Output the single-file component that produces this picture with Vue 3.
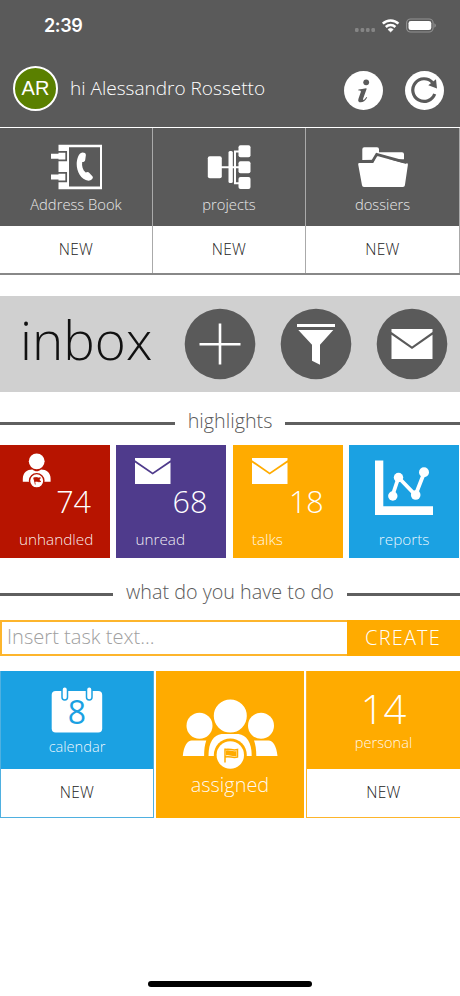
<script setup>
const shortcuts = [
  { id: 'book', label: 'Address Book' },
  { id: 'projects', label: 'projects' },
  { id: 'dossiers', label: 'dossiers' }
]
const highlights = [
  { id: 'unhandled', count: 74, icon: 'person' },
  { id: 'unread', count: 68, icon: 'mail' },
  { id: 'talks', count: 18, icon: 'mail' },
  { id: 'reports', icon: 'chart' }
]
</script>

<template>
  <div class="screen">
    <header class="header">
      <div class="status">
        <span class="time">2:39</span>
        <svg class="signals" width="84" height="18" viewBox="0 0 84 18">
          <g fill="#858585">
            <rect x="1" y="12" width="3.6" height="4" rx="1.3" /><rect x="6.6" y="12" width="3.6" height="4" rx="1.3" />
            <rect x="12" y="12" width="3.6" height="4" rx="1.3" /><rect x="17.4" y="12" width="3.6" height="4" rx="1.3" />
          </g>
          <g fill="none" stroke="#fff" stroke-width="2.5">
            <path d="M28.8 7.7a11 11 0 0 1 15.6 0" /><path d="M31.8 11a7 7 0 0 1 9.6 0" />
          </g>
          <path d="M36.6 16 33.9 13.4a4 4 0 0 1 5.4 0Z" fill="#fff" stroke="#fff" stroke-width=".5" />
          <rect x="52.6" y="3" width="26.5" height="13" rx="4" fill="none" stroke="#929292" stroke-width="1.1" />
          <rect x="54.5" y="4.9" width="22.8" height="9.2" rx="2.3" fill="#fff" />
          <path d="M80.4 7.3c2 .8 2 3.6 0 4.4Z" fill="#929292" />
        </svg>
      </div>
      <div class="user">
        <span class="avatar">AR</span>
        <span class="hello">hi Alessandro Rossetto</span>
        <svg class="info" width="39" height="39" viewBox="0 0 39 39">
          <circle cx="19.5" cy="19.5" r="19.5" fill="#fff" />
          <circle cx="22.2" cy="11.3" r="2.9" fill="#5a5a5a" />
          <path d="M14.4 18.5c2.4-.2 5-.8 7.7-1.2.5 0 .6.3.5.7l-3.5 9.8c-.4 1.3.4 1.4 1.3.7.7-.6 1.4-1.4 2-2.4l.8.4c-2 3.5-4.2 4.8-6.4 4.8-2.1 0-3.1-1.3-2.4-3.4l2.4-6.8c.4-1.3-.3-1.7-2.4-1.7Z" fill="#5a5a5a" />
        </svg>
        <svg class="refresh" width="39" height="39" viewBox="0 0 39 39">
          <circle cx="19.5" cy="19.5" r="19.5" fill="#fff" />
          <path d="M29.7 23A11.3 11.3 0 1 1 27.500 11.500" fill="none" stroke="#5a5a5a" stroke-width="3.200" />
          <path d="M31 8.300 32 17.400 23.300 14.200Z" fill="#5a5a5a" />
        </svg>
      </div>
    </header>

    <nav class="shortcuts">
      <div v-for="s in shortcuts" :key="s.id" class="shortcut">
        <div class="shortcut-top">
          <svg v-if="s.id === 'book'" width="52" height="46" viewBox="0 0 52 46">
            <path d="M8.500 .7h43.500v44.500h-43.500z" fill="#fff" />
            <path d="M19 3.200h31v39.300h-31z" fill="#5a5a5a" />
            <path d="M8 7.900h8.200v8.500H8M8 28.900h8.200v8.500H8" fill="none" stroke="#5a5a5a" stroke-width="1.700" />
            <path d="M1 9.700h13.500v5H1zM1 30.500h13.500v5H1z" fill="#fff" />
            <path d="M30.500 9.200c2-1.300 5.300-.5 5.400 1.700l-.7 5c-.2 1.700-1.700 2.100-3 2-.6 4.100.5 7.800 3.500 10.700 1.400-1 2.800-.8 3.700.3l3.200 3.600c1.200 1.700-1.400 4.100-4.100 4.200C30.800 36.200 26.600 27 26.700 20.300c0-4.600 1.500-9.500 3.800-11.100Z" fill="#fff" />
          </svg>
          <svg v-else-if="s.id === 'projects'" width="46" height="46" viewBox="0 0 46 46">
            <path d="M13 23.200h20M33 7.500H29V39.300H34" fill="none" stroke="#fff" stroke-width="2" />
            <g fill="#fff">
              <rect x="1.800" y="12.300" width="14" height="22" rx="2" /><rect x="22.500" y="7" width="7.500" height="32" rx="2" fill="none" />
              <rect x="22.500" y="7" width="4.300" height="32" rx="1.500" />
              <rect x="32.500" y="1.200" width="12" height="12" rx="2" /><rect x="32.500" y="17.200" width="12" height="12" rx="2" /><rect x="32.500" y="33" width="12" height="12" rx="2" />
            </g>
          </svg>
          <svg v-else width="52" height="46" viewBox="0 0 52 46">
            <path d="M5.300 16V5.200a2 2 0 0 1 2-2H20a2 2 0 0 1 2 2v3h23a2 2 0 0 1 2 2v5Z" fill="#fff" />
            <path d="M2 19h14l3.500-7.300 27 7.300h3a1.500 1.500 0 0 1 1.400 1.700l-3 20.500a2 2 0 0 1-2 1.800H7a2 2 0 0 1-2-1.800L1.200 20.600Q1 19 2 19Z" fill="#fff" />
            <path d="M3 17.400H15.500l4.200-7 30 8.300" fill="none" stroke="#5a5a5a" stroke-width="2.800" />
          </svg>
          <span class="caption">{{ s.label }}</span>
        </div>
        <div class="new">NEW</div>
      </div>
    </nav>

    <section class="inbox">
      <span class="inbox-title">inbox</span>
      <svg class="round" width="72" height="72" viewBox="0 0 72 72">
        <circle cx="36" cy="36" r="35.300" fill="#5a5a5a" />
        <path d="M15.500 36.300h41M36 15.600v41" stroke="#fff" stroke-width="2.600" />
      </svg>
      <svg class="round" width="72" height="72" viewBox="0 0 72 72">
        <circle cx="36" cy="36" r="35.300" fill="#5a5a5a" />
        <path d="M17 16h38v3H17zM18.300 22h35L40 36.800v20l-8-4v-16Z" fill="#fff" />
      </svg>
      <svg class="round" width="72" height="72" viewBox="0 0 72 72">
        <circle cx="36" cy="36" r="35.300" fill="#5a5a5a" />
        <path d="M15.500 21h41v3L36 38.500 15.500 24ZM15.500 26.700 36 41 56.500 26.700V51h-41Z" fill="#fff" />
      </svg>
    </section>

    <h2 class="heading first"><span>highlights</span></h2>

    <section class="highlights">
      <div v-for="h in highlights" :key="h.id" class="tile" :class="h.id">
        <svg v-if="h.icon === 'person'" class="tile-icon" width="36" height="36" viewBox="0 0 36 36">
          <circle cx="18.700" cy="8.300" r="7.900" fill="#fff" />
          <path d="M4.800 28.800v-3c0-6.300 4.500-9.300 9.500-9.300 2.800 2.400 6 2.400 8.800 0 5 0 9.500 3 9.500 9.300v3Z" fill="#fff" />
          <circle cx="18.700" cy="27.800" r="7.200" fill="#fff" stroke="#b71400" stroke-width="1.400" />
          <path d="M15.800 24.500 17.300 31.500M15.900 25c2.500-1.500 3.500.5 6.500-.2l-1.400 2.200 1.800 1.500c-3 .8-4-.8-6 0Z" fill="#b71400" stroke="#b71400" stroke-width=".8" />
        </svg>
        <svg v-else-if="h.icon === 'mail'" class="tile-icon" width="36" height="36" viewBox="0 0 36 36">
          <path d="M0 5h35.500v2.200L17.700 19.600 0 7.200ZM0 9.500l17.700 12.100L35.500 9.500V31H0Z" fill="#fff" />
        </svg>
        <svg v-else class="chart" width="60" height="58" viewBox="0 0 60 58">
          <path d="M1 1.500h8.300v45.800H59V56H1Z" fill="#fff" />
          <path d="M18.500 36.500 24.500 18.500 41.500 36 50.500 13" fill="none" stroke="#fff" stroke-width="3.800" />
          <g fill="#fff"><circle cx="18.800" cy="37" r="4.700" /><circle cx="24.500" cy="18.500" r="4.700" /><circle cx="41.700" cy="36" r="4.800" /><circle cx="50" cy="13.200" r="5" /></g>
        </svg>
        <span v-if="h.count" class="count">{{ h.count }}</span>
        <span class="tile-label">{{ h.id }}</span>
      </div>
    </section>

    <h2 class="heading second"><span>what do you have to do</span></h2>

    <form class="task" @submit.prevent>
      <input class="task-input" type="text" placeholder="Insert task text..." />
      <button class="create">CREATE</button>
    </form>

    <section class="todo">
      <div class="card calendar">
        <div class="card-top">
          <svg width="52" height="48" viewBox="0 0 52 48">
            <rect x=".7" y="5" width="50.500" height="41.500" rx="4" fill="#fff" />
            <g fill="#fff" stroke="#1ba1e2" stroke-width="1.500"><rect x="11" y=".7" width="5.500" height="13.300" rx="2.700" /><rect x="35.500" y=".7" width="5.500" height="13.300" rx="2.700" /></g>
            <text class="day" x="26" y="38.300" text-anchor="middle">8</text>
          </svg>
          <span class="card-label">calendar</span>
        </div>
        <div class="new">NEW</div>
      </div>
      <div class="card assigned">
        <svg width="96" height="72" viewBox="0 0 96 72">
          <g fill="#fff">
            <circle cx="17.500" cy="26.700" r="13" /><circle cx="79" cy="26.700" r="13" />
            <path d="M.8 57c1-10 4.500-15.500 9-15.500h14.500c-1.500 4-2.200 9-2.200 15.500ZM95.500 57c-1-10-4.500-15.500-9-15.500H72c1.500 4 2.300 9 2.300 15.500Z" />
            <path d="M26.500 57c0-14 5-21 13-22h17c8 1 13.200 8 13.200 22Z" />
            <circle cx="48.300" cy="17" r="17.300" stroke="#ffab00" stroke-width="1.600" />
          </g>
          <circle cx="48.300" cy="56" r="16.500" fill="#ffab00" />
          <circle cx="48.300" cy="56" r="13.700" fill="#fff" />
          <path d="M43 49.500v14M43 50.500c5-1.500 7 1.500 12.500 0v7.500c-5.500 1.500-7.500-1.500-12.500 0" fill="none" stroke="#ffab00" stroke-width="1.500" />
          <path d="M44 51.500c4-1 6 1.500 10.500.5V57c-4.500 1-6.500-1.500-10.500-.5Z" fill="#ffab00" />
        </svg>
        <span class="assigned-label">assigned</span>
      </div>
      <div class="card personal">
        <div class="card-top">
          <span class="big">14</span>
          <span class="card-label">personal</span>
        </div>
        <div class="new">NEW</div>
      </div>
    </section>

    <div class="home"></div>
  </div>
</template>

<style>
body { margin: 0; background: #fff; }
</style>

<style scoped>
* { box-sizing: border-box; }
.screen { width: 460px; height: 996px; display: flex; flex-direction: column; overflow: hidden; background: #fff; font-family: "Open Sans", sans-serif; font-weight: 300; color: #5a5a5a; }
.header { height: 128px; background: #5a5a5a; border-bottom: 1px solid #fff; color: #fff; }
.status { height: 50px; display: flex; justify-content: space-between; padding: 15px 22px 0 44px; }
.time { font: 600 18px/22px Inter, sans-serif; letter-spacing: -.4px; }
.signals { display: block; margin-top: 1px; }
.user { display: flex; align-items: center; height: 77px; padding-left: 13px; }
.avatar { flex: none; width: 45px; height: 45px; border: 2px solid #fff; border-radius: 50%; background: #5a8000; font: 400 20px/41px "Liberation Sans", sans-serif; text-align: center; }
.hello { flex: none; width: 286px; margin-top: -1px; padding-left: 12px; font-size: 19.05px; line-height: 28px; white-space: nowrap; }
.info { flex: none; margin: 3px 22px 0 0; }
.refresh { flex: none; margin-top: 3px; }

.shortcuts { display: grid; grid-template-columns: 153px 153px 154px; height: 147px; border-bottom: 2px solid #888; }
.shortcut { border-right: 1px solid #aaa; }
.shortcut-top { height: 98px; background: #5a5a5a; padding-top: 16px; display: flex; flex-direction: column; align-items: center; color: #e8e8e8; }
.shortcut-top svg { display: block; }
.caption { margin-top: 4px; font-size: 14.75px; line-height: 20px; }
.new { height: 47px; color: #222; font-size: 15.500px; line-height: 47px; text-align: center; letter-spacing: .3px; }

.inbox { margin-top: 21px; height: 96px; background: #d0d0d0; display: flex; align-items: center; gap: 24px; padding-left: 20px; }
.inbox-title { flex: none; width: 140px; margin-top: -9px; font-size: 53px; line-height: 80px; color: #111; }
.round { flex: none; }

.heading { margin: 0; height: 30px; display: flex; align-items: center; gap: 13px; font-size: 19.750px; font-weight: 300; line-height: 30px; white-space: nowrap; }
.heading::before, .heading::after { content: ""; flex: 1; height: 3px; background: #5f5f5f; margin-top: 4px; }
.first { margin-top: 14px; }
.second { margin-top: 19px; }

.highlights { margin-top: 9px; display: grid; grid-template-columns: repeat(4, 110px); column-gap: 6.400px; height: 113px; color: #fff; }
.tile { display: flex; flex-direction: column; padding: 8px 19px 0; }
.tile-icon { flex: none; }
.unhandled { background: #b71400; }
.unread { background: #4f3b8c; }
.talks { background: #ffab00; }
.reports { background: #1ba1e2; align-items: center; }
.unhandled .tile-icon { margin-left: -1px; }
.count { margin-top: -4px; text-align: right; font-size: 30.500px; line-height: 32px; }
.tile-label { margin-top: 12px; font-size: 15.300px; line-height: 20px; color: rgba(255, 255, 255, .92); }
.chart { flex: none; margin-top: 6px; }

.task { margin-top: 13px; height: 36px; display: flex; }
.task-input { width: 347px; height: 36px; padding: 0 5px 3px; border: 2px solid #fdb52c; border-right: 0; border-radius: 0; outline: 0; background: #fff; font: 300 20.100px/30px "Open Sans", sans-serif; }
.task-input::placeholder { color: #a0a0a0; opacity: 1; }
.create { width: 113px; padding: 0 1px 1px 0; border: 0; background: #ffab00; color: #fff; font: 300 20px/30px "Open Sans", sans-serif; letter-spacing: 1.150px; }

.todo { margin-top: 15px; height: 147px; display: grid; grid-template-columns: 154px 148px 154px; column-gap: 2px; color: #fff; }
.card-top { height: 98px; display: flex; flex-direction: column; align-items: center; }
.calendar { background: #fff; border: 1px solid #4fb0e0; border-top: 0; }
.calendar .card-top { background: #1ba1e2; padding-top: 15px; }
.card-label { font-size: 14.600px; line-height: 20px; color: rgba(255, 255, 255, .94); }
.calendar .card-label { margin-top: 2px; }
.day { font: 400 32px "Open Sans", sans-serif; fill: #1ba1e2; }
.assigned { background: #ffab00; display: flex; flex-direction: column; align-items: center; padding-top: 28px; }
.assigned-label { font-size: 19.900px; line-height: 28px; color: rgba(255, 255, 255, .94); }
.personal { background: #fff; border: 1px solid #fdb52c; border-top: 0; border-right: 0; }
.personal .card-top { background: #ffab00; padding-top: 14px; }
.big { font-size: 40px; line-height: 47px; }
.home { width: 164px; height: 6px; border-radius: 3px; background: #000; margin: auto auto 9px; }
</style>
